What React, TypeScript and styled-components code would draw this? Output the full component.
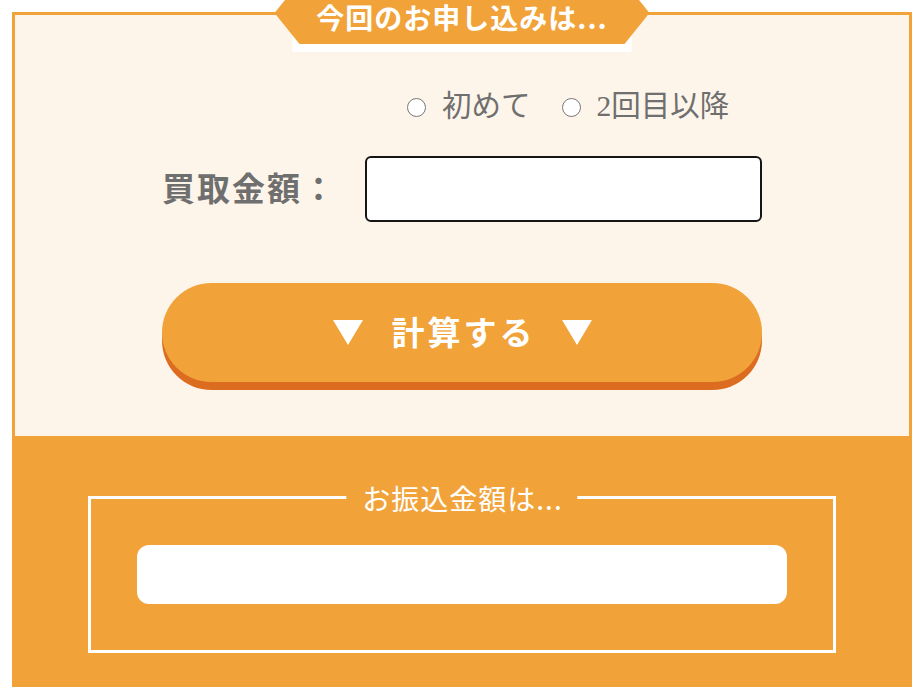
import React from "react";
import styled, { createGlobalStyle } from "styled-components";

const ORANGE = "#f1a33a";
const CREAM = "#fef5ea";
const LIP = "#dc6c1f";
const GRAY = "#6f6f6f";

const Global = createGlobalStyle`
  html, body { margin: 0; padding: 0; background: #ffffff; }
  body { font-family: "Noto Sans CJK JP", "Noto Sans", sans-serif; }
  * { box-sizing: border-box; }
`;

const Page = styled.div`
  padding: 12px 0 0 12px;
`;

const Card = styled.div`
  width: 900px;
  border: 3px solid ${ORANGE};
  background: ${ORANGE};
`;

const Upper = styled.section`
  position: relative;
  background: ${CREAM};
  height: 421px;
  padding-top: 71px;
`;

const Tab = styled.div`
  position: absolute;
  top: -33px;
  left: 50%;
  transform: translateX(-50%);
  width: 375px;
  height: 70px;
`;

const TabUnder = styled.div`
  position: absolute;
  left: 18px;
  top: 33px;
  width: 339px;
  height: 37px;
  background: #ffffff;
`;

const TabHex = styled.div`
  position: absolute;
  inset: 0 0 auto 0;
  height: 62px;
  background: ${ORANGE};
  clip-path: polygon(0 31px, 25px 0, 350px 0, 375px 31px, 350px 62px, 25px 62px);
  display: flex;
  align-items: center;
  justify-content: center;
  padding-top: 7px;
  color: #ffffff;
  font-weight: 700;
  font-size: 28px;
  letter-spacing: 1px;
  line-height: 1;
  white-space: nowrap;
`;

const Column = styled.div`
  width: 600px;
  margin: 0 auto;
  display: flex;
  flex-direction: column;
`;

const RadioRow = styled.div`
  display: flex;
  align-items: center;
  height: 40px;
  margin-left: 245px;
  gap: 31px;
`;

const RadioLabel = styled.label`
  display: flex;
  align-items: center;
  gap: 16px;
  font-family: "Liberation Serif", "Noto Sans CJK JP", serif;
  font-size: 29.5px;
  color: ${GRAY};
  line-height: 40px;
`;

const RadioDot = styled.span`
  display: inline-block;
  flex: none;
  width: 19px;
  height: 19px;
  border-radius: 50%;
  border: 1.5px solid #777777;
  background: #ffffff;
  margin-top: 2px;
`;

const FieldRow = styled.div`
  display: flex;
  align-items: center;
  margin-top: 30px;
  height: 66px;
`;

const FieldLabel = styled.label`
  width: 203px;
  font-size: 33px;
  font-weight: 700;
  letter-spacing: 2px;
  color: ${GRAY};
  line-height: 1;
  white-space: nowrap;
  margin-top: -4px;
`;

const AmountInput = styled.input`
  width: 397px;
  height: 66px;
  border: 2px solid #151515;
  border-radius: 6px;
  background: #ffffff;
  outline: none;
  font-size: 28px;
  padding: 0 12px;
`;

const CalcButton = styled.button`
  margin-top: 61px;
  width: 600px;
  height: 99px;
  border: none;
  border-radius: 50px;
  background: ${ORANGE};
  box-shadow: 0 8px 0 ${LIP};
  color: #ffffff;
  display: flex;
  align-items: center;
  justify-content: center;
  gap: 29px;
  font-family: "Noto Sans CJK JP", sans-serif;
  font-size: 33px;
  font-weight: 700;
  letter-spacing: 3px;
  cursor: pointer;
  padding: 0;
`;

const ButtonText = styled.span`
  line-height: 1;
  margin-right: -3px;
  margin-top: -3px;
`;

const Lower = styled.section`
  background: ${ORANGE};
  padding: 60px 73px 31px;
`;

const Frame = styled.div`
  position: relative;
  border: 3px solid #ffffff;
  padding: 46px;
`;

const FrameTitle = styled.h3`
  position: absolute;
  top: -17px;
  left: 50%;
  transform: translateX(-50%);
  margin: 0;
  padding: 0 15px 0 16px;
  background: ${ORANGE};
  color: #ffffff;
  font-size: 28px;
  font-weight: 400;
  letter-spacing: 1px;
  line-height: 32px;
  white-space: nowrap;
`;

const ResultBox = styled.div`
  height: 59px;
  border-radius: 12px;
  background: #ffffff;
`;

const Triangle = () => (
  <svg width="30" height="25" viewBox="0 0 30 25" aria-hidden="true">
    <polygon points="0,0 30,0 15,25" fill="#ffffff" />
  </svg>
);

export default function App() {
  return (
    <>
      <Global />
      <Page>
        <Card>
          <Upper>
            <Tab>
              <TabUnder />
              <TabHex>今回のお申し込みは...</TabHex>
            </Tab>
            <Column>
              <RadioRow>
                <RadioLabel>
                  <RadioDot />
                  初めて
                </RadioLabel>
                <RadioLabel>
                  <RadioDot />
                  2回目以降
                </RadioLabel>
              </RadioRow>
              <FieldRow>
                <FieldLabel>買取金額：</FieldLabel>
                <AmountInput type="text" />
              </FieldRow>
              <CalcButton type="button">
                <Triangle />
                <ButtonText>計算する</ButtonText>
                <Triangle />
              </CalcButton>
            </Column>
          </Upper>
          <Lower>
            <Frame>
              <FrameTitle>お振込金額は...</FrameTitle>
              <ResultBox />
            </Frame>
          </Lower>
        </Card>
      </Page>
    </>
  );
}
